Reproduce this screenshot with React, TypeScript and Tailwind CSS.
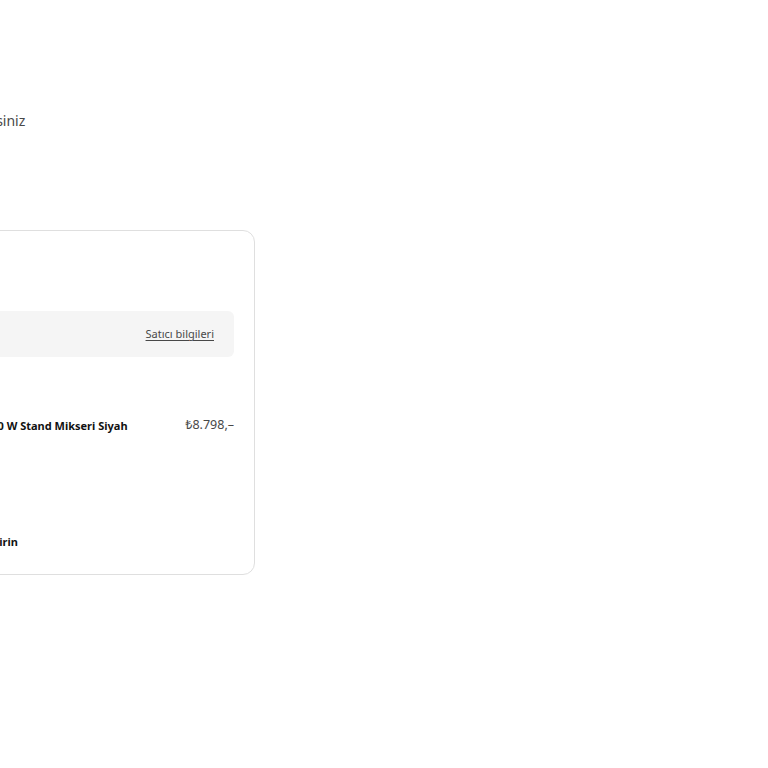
export default function App() {
  return (
    <div className="min-h-screen w-full bg-white overflow-hidden font-['Noto_Sans',sans-serif]">
      <div className="ml-[-245px] w-[500px] pt-[111px]">
        <p className="text-[14px] leading-[20px] text-[#484848] whitespace-nowrap pl-[21px]">
          Sipariş özetinizi buradan görebilirsiniz
        </p>

        <div className="mt-[99px] rounded-[12px] border border-[#dfdfdf] p-5 pb-[22px]">
          <div className="h-[40px] mb-5 flex items-center">
            <span className="text-[14px] font-bold text-[#111]">Satıcı</span>
          </div>

          <div className="h-[46px] rounded-[6px] bg-[#f5f5f5] flex items-center justify-between px-5">
            <span className="text-[12px] text-[#484848]">IKEA</span>
            <a className="text-[11px] leading-[18px] text-[#484848] underline underline-offset-2">
              Satıcı bilgileri
            </a>
          </div>

          <div className="mt-[58px] flex items-start gap-4">
            <div className="w-[124px] h-[18px] shrink-0" />
            <span className="flex-1 text-[11px] leading-[18px] font-bold text-[#111] mt-[2px] whitespace-nowrap">
              KitchenAid 1000 W Stand Mikseri Siyah
            </span>
            <span className="text-[12.5px] leading-[20px] text-[#484848]">₺8.798,–</span>
          </div>

          <div className="mt-[93px] pl-[113px]">
            <span className="text-[11px] leading-[18px] font-bold text-[#111]">Ürünleri gözden geçirin</span>
          </div>
        </div>
      </div>
    </div>
  );
}
